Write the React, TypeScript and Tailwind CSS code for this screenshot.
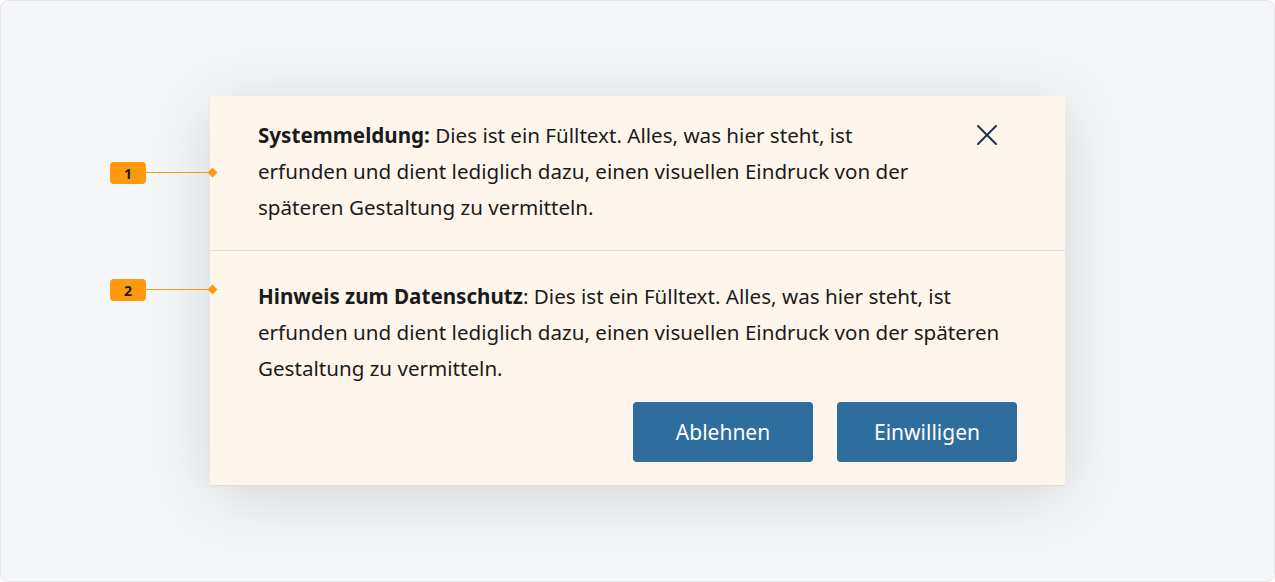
import React from 'react';
import { X } from 'lucide-react';

const Marker: React.FC<{ n: number }> = ({ n }) => (
  <div className="flex items-start">
    <div className="w-[36px] h-[22px] rounded-[4px] bg-[#ff9a0e] flex items-center justify-center text-[14px] font-bold text-[#1a1a1a]">
      {n}
    </div>
    <div className="w-[66px] h-[1px] mt-[10px] bg-[#ff9a0e]" />
    <div className="w-[7px] h-[7px] mt-[7px] bg-[#ff9a0e] rotate-45 -ml-[3px]" />
  </div>
);

export default function App() {
  return (
    <div className="w-[1275px] h-[582px] bg-white font-['Noto_Sans',sans-serif]">
      <div className="relative w-full h-full rounded-[8px] border border-[#e4e6ea] bg-[#f5f6f8] overflow-hidden">
        <div className="absolute left-[209px] top-[95px] w-[855px] bg-[#fef6ec] border-b border-[#e2dcd4] shadow-[0_10px_60px_rgba(0,0,0,0.14)] text-[#1b1b1b] text-[20.6px] leading-[36px]">
          {/* system message */}
          <div className="flex items-start justify-between pl-[48px] pr-[60px] pt-[21px] pb-[25px] border-b border-[#e2dcd4]">
            <p className="w-[670px]">
              <strong className="font-bold">Systemmeldung:</strong> Dies ist ein Fülltext. Alles, was hier steht, ist erfunden und dient lediglich dazu, einen visuellen Eindruck von der späteren Gestaltung zu vermitteln.
            </p>
            <button className="text-[#1c3450]">
              <X size={36} strokeWidth={1.35} />
            </button>
          </div>

          {/* privacy notice */}
          <div className="pl-[48px] pr-[48px] pt-[27px] pb-[23px]">
            <p className="w-[760px]">
              <strong className="font-bold">Hinweis zum Datenschutz</strong>: Dies ist ein Fülltext. Alles, was hier steht, ist erfunden und dient lediglich dazu, einen visuellen Eindruck von der späteren Gestaltung zu vermitteln.
            </p>
            <div className="flex justify-end gap-[24px] mt-[16px]">
              <button className="w-[180px] h-[60px] rounded-[4px] bg-[#2e6e9e] text-white text-[21px]">Ablehnen</button>
              <button className="w-[180px] h-[60px] rounded-[4px] bg-[#2e6e9e] text-white text-[21px]">Einwilligen</button>
            </div>
          </div>
        </div>

        {/* callouts */}
        <div className="absolute left-[109px] top-[161px]">
          <Marker n={1} />
        </div>
        <div className="absolute left-[109px] top-[278px]">
          <Marker n={2} />
        </div>
      </div>
    </div>
  );
}
